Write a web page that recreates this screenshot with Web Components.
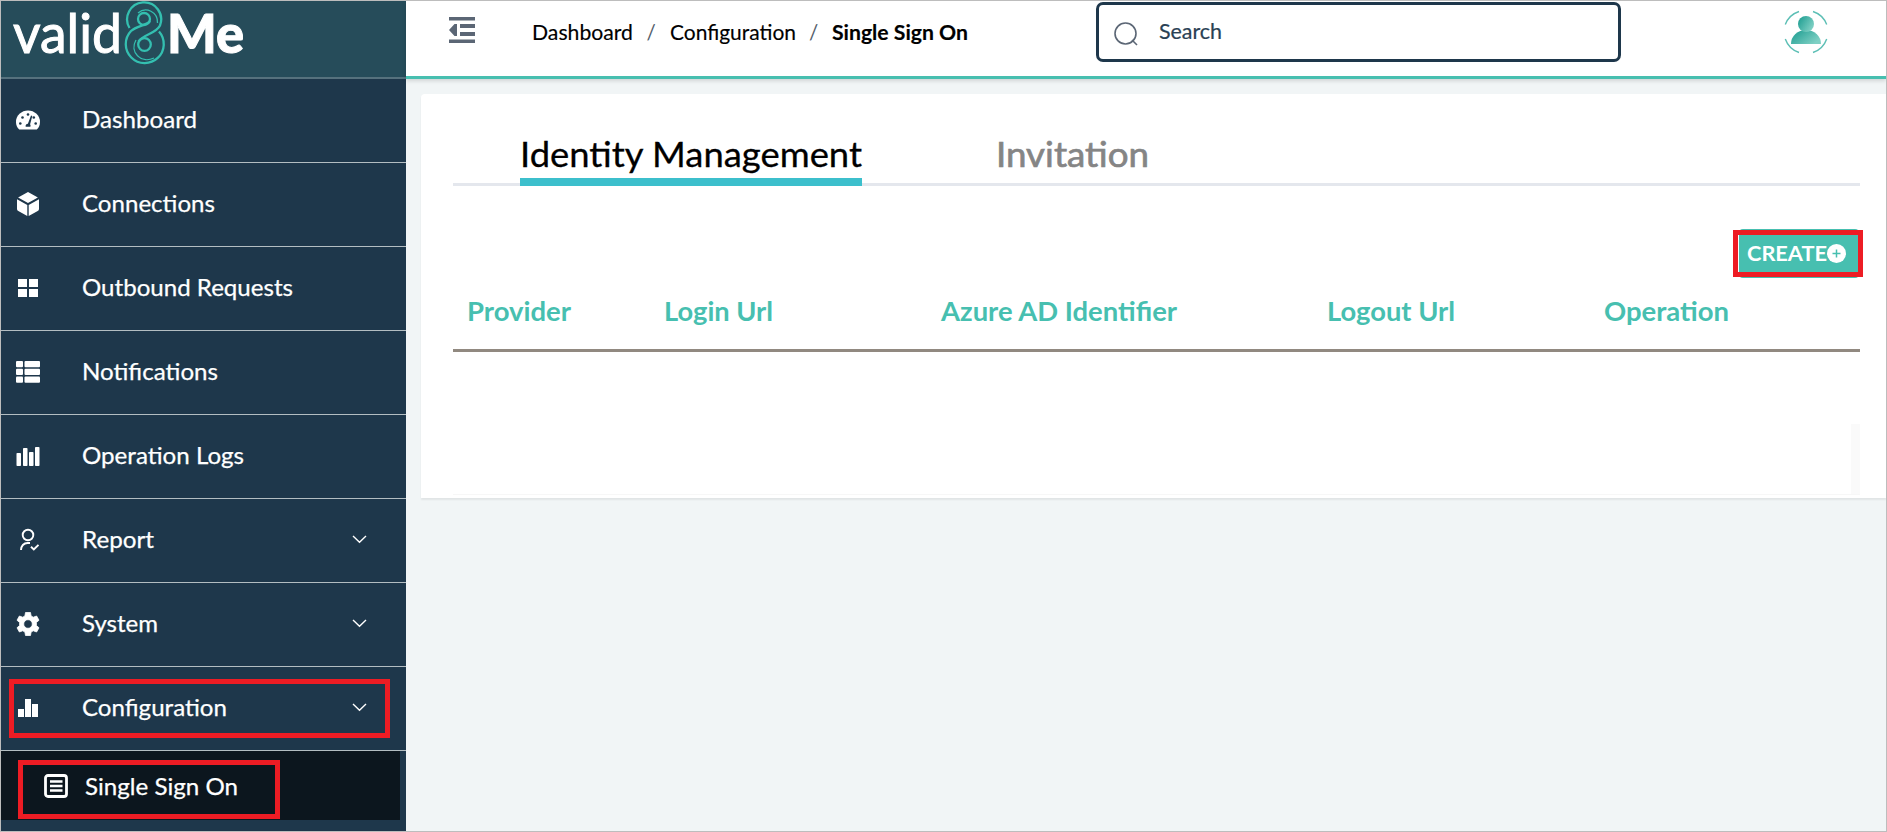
<!DOCTYPE html>
<html lang="en">
<head>
<meta charset="utf-8">
<title>valid8Me</title>
<style>
html,body{margin:0;height:100%}
body{font-family:Lato,"Liberation Sans",sans-serif;overflow:hidden}
</style>
</head>
<body>
<v-app></v-app>
<script>
const define=(name,html,init)=>customElements.define(name,class extends HTMLElement{
  connectedCallback(){
    if(this.shadowRoot)return;
    this.attachShadow({mode:'open'}).innerHTML=typeof html==='function'?html(this):html;
    if(init)init(this);
  }
});

/* A label whose glyphs are condensed or widened to a given advance width. */
define('v-label',`<style>:host{display:block;flex:none;line-height:1;white-space:nowrap}
span{display:inline-block;transform-origin:0 50%}</style><span><slot></slot></span>`,el=>{
  const w=+el.getAttribute('w'),s=el.shadowRoot.querySelector('span');
  el.style.width=w+'px';
  s.style.transform=`scaleX(${w/s.getBoundingClientRect().width})`;
});

const ICONS={
  gauge:'<path fill="#fff" d="M3.2 21.5C1.1 19.7 0 17 0 14A12 11.5 0 0 1 24 14c0 3-1.100 5.700-3.200 7.500z"/><g fill="#1e374b"><circle cx="4.300" cy="15.500" r="1.300"/><circle cx="6.500" cy="9.500" r="1.300"/><circle cx="12" cy="6.500" r="1.300"/><circle cx="17.800" cy="9.500" r="1.300"/><circle cx="19.700" cy="15.500" r="1.300"/><path d="M15 7.500l1.300.4-2.200 8.300c.6.900.6 1.800.2 2.600H9.700c-.5-1.500.5-3 2.200-3.100z"/></g>',
  cube:'<path fill="#fff" d="M12 0l9.900 5.600L12 11 2.100 5.600zM1 7.200l10.300 5.700V24L2.300 19Q1 18.300 1 17zM23 7.200l-10.300 5.700V24l9-5Q23 18.300 23 17z"/>',
  grid:'<path fill="#fff" d="M2 3h9v8H2zM13 3h9v8h-9zM2 13h9v8H2zM13 13h9v8h-9z"/>',
  list:'<g fill="#fff"><rect y="1" width="7" height="6.300" rx="1"/><rect x="8.500" y="1" width="15.500" height="6.300" rx="1"/><rect y="8.800" width="7" height="6.300" rx="1"/><rect x="8.500" y="8.800" width="15.500" height="6.300" rx="1"/><rect y="16.500" width="7" height="6.300" rx="1"/><rect x="8.500" y="16.500" width="15.500" height="6.300" rx="1"/></g>',
  bars:'<g fill="#fff"><rect x=".5" y="9" width="4.500" height="13" rx=".8"/><rect x="7" y="4" width="4.500" height="18" rx=".8"/><rect x="13" y="8" width="4.500" height="14" rx=".8"/><rect x="19" y="3" width="4.500" height="19" rx=".8"/></g>',
  user:'<g fill="none" stroke="#fff" stroke-width="1.900"><circle cx="12" cy="7" r="5.300"/><path d="M5 22c0-4 2.800-7 6.500-7H14M15 18.800l2.800 2.700 4.700-4.700"/></g>',
  gear:'<path fill="#fff" stroke="#fff" stroke-width=".8" stroke-linejoin="round" fill-rule="evenodd" d="M9.500.5h5l.6 3.500 2.200 1.200 3.300-1.200 2.400 4.200-2.600 2.300v3l2.600 2.300-2.400 4.200-3.300-1.200-2.200 1.200-.6 3.500h-5L8.900 20l-2.200-1.200L3.400 20 1 15.800l2.600-2.300v-3L1 8.200 3.400 4l3.300 1.200L8.900 4zM12 7.700a4.300 4.300 0 1 0 0 8.600 4.300 4.300 0 0 0 0-8.600z"/>',
  chart:'<path fill="#fff" d="M2 13h6v8H2zM9 3h6v18H9zM16 8h6v13h-6z"/>',
  doc:'<rect x="1.500" y="1.500" width="21" height="21" rx="2.500" fill="none" stroke="#fff" stroke-width="2.800"/><path stroke="#fff" stroke-width="2.500" d="M6 7.500h12.500M6 12h12.500M6 16.500h12.500"/>'
};

define('v-logo',`<style>:host{box-sizing:border-box;display:flex;height:78px;background:#264c5a;border-bottom:2px solid #56717d;color:#fff;padding-left:12px;align-items:flex-start}
v-label{font-size:54px;margin-top:5px;-webkit-text-stroke:1px #fff}.me{font-weight:900;margin-left:1px}svg{flex:none;margin-left:2px}</style>
<v-label w="109">valid</v-label>
<svg width="42" height="66" viewBox="0 0 42 66" fill="none" stroke="#34bfb0" stroke-width="2.300"><path d="M5.500 27A17 17 0 1 1 36 24.500C32 33 19 33 14.500 40.500"/><path d="M35 30.500A19 19 0 1 1 7 30C13 24.500 22 25 26 20"/><circle cx="20" cy="18" r="6"/><circle cx="20.500" cy="43.500" r="6.300"/><path stroke-width="1.300" d="M14 12C22 5 34 11 33.500 22M12 39C5 51 17 63 30 57"/></svg>
<v-label class="me" w="77">Me</v-label>`);

define('v-nav-item',el=>`<style>
:host{box-sizing:border-box;display:flex;align-items:center;height:84px;padding-left:15px;border-bottom:1px solid #b3bdc2;color:#fff;font-size:24px;position:relative}
:host([sub]){height:69px;width:399px;border:0;background:#0c161e;padding-left:43px}
svg{flex:none;margin:-2px 42px 0 0}:host([sub]) svg{margin:0 17px 0 0}
v-label{margin-top:-3px;-webkit-text-stroke:.25px #fff}
:host([sub]) v-label{margin-top:0}
svg.chev{margin:-2px 39px 0 auto}
.mark{position:absolute;box-sizing:border-box;border:5px solid #ed1c24;left:8px;top:12px;width:381px;height:59px}
:host([sub]) .mark{left:17px;top:9px;width:262px}
</style><svg width="24" height="24" viewBox="0 0 24 24">${ICONS[el.getAttribute('icon')]}</svg>
<v-label w="${el.getAttribute('w')}"><slot></slot></v-label>
${el.hasAttribute('open')?'<svg class="chev" width="15" height="9" viewBox="0 0 15 9"><path d="M1 1l6.500 6.300L14 1" fill="none" stroke="#fff" stroke-width="1.400"/></svg>':''}
${el.hasAttribute('marked')?'<div class="mark"></div>':''}`);

define('v-sidebar',`<style>:host{display:block;width:405px;background:#1e374b;height:100%}</style>
<v-logo></v-logo>
<v-nav-item icon="gauge" w="115">Dashboard</v-nav-item>
<v-nav-item icon="cube" w="133">Connections</v-nav-item>
<v-nav-item icon="grid" w="211">Outbound Requests</v-nav-item>
<v-nav-item icon="list" w="136">Notifications</v-nav-item>
<v-nav-item icon="bars" w="162">Operation Logs</v-nav-item>
<v-nav-item icon="user" w="72" open>Report</v-nav-item>
<v-nav-item icon="gear" w="76" open>System</v-nav-item>
<v-nav-item icon="chart" w="145" open marked>Configuration</v-nav-item>
<v-nav-item icon="doc" w="153" sub marked>Single Sign On</v-nav-item>`);

define('v-search',`<style>:host{box-sizing:border-box;display:flex;width:525px;height:60px;border:3px solid #1e374b;border-radius:7px;padding:17px 0 0 15px;color:#2a4154;font-size:20.500px;background:#fff}
v-label{margin:-1px 0 0 20px;-webkit-text-stroke:.2px}svg{flex:none}</style>
<svg width="25" height="25" viewBox="0 0 25 25" fill="none" stroke="#5b6675" stroke-width="1.600"><circle cx="11.500" cy="11.500" r="10.500"/><path d="M18 18l5 5"/></svg>
<v-label w="63">Search</v-label>`);

define('v-avatar',`<style>:host{display:block;width:46px;height:46px}</style>
<svg width="46" height="46" viewBox="0 0 46 46"><defs><linearGradient id="g" x2="1" y2=".6"><stop stop-color="#189a8e"/><stop offset="1" stop-color="#7fd0c4"/></linearGradient></defs>
<g fill="none" stroke="#5cbfb5" stroke-width="1.400"><path d="M2.300 15.500A22 22 0 0 1 16 2.500M30 2.500A22 22 0 0 1 43.700 15.500M43.700 30A22 22 0 0 1 30 43.500M16 43.500A22 22 0 0 1 2.300 30"/></g>
<path fill="url(#g)" d="M8 35a15 14 0 0 1 30 0z"/><circle cx="23" cy="15" r="8" fill="url(#g)"/></svg>`);

define('v-header',`<style>:host{box-sizing:border-box;display:flex;height:78px;background:#fff;border-bottom:3px solid #47bfb0;box-shadow:0 2px 4px #0002;font-size:20.500px;color:#000;position:relative;align-items:flex-start}
.menu{margin:16px 0 0 43px;flex:none}
nav{display:flex;margin:21px 0 0 57px}i{font-style:normal;color:#55606c;width:36.500px;text-align:center;line-height:1}
nav v-label{-webkit-text-stroke:.15px}
b{font-weight:700}v-search{margin:1px 0 0 128px}v-avatar{margin:8px 0 0 162px}</style>
<svg class="menu" width="26" height="26" viewBox="0 0 26 26" fill="#5b6675"><path d="M0 0h26v3.500H0zM11 7h15v4H11zM11 15h15v4H11zM0 22.500h26V26H0zM0 13l5.500-6H8v12H5.500z"/></svg>
<nav><v-label w="101">Dashboard</v-label><i>/</i><v-label w="126">Configuration</v-label><i>/</i><v-label w="136"><b>Single Sign On</b></v-label></nav>
<v-search></v-search><v-avatar></v-avatar>`);

define('v-tab',`<style>:host{box-sizing:border-box;display:block;height:54px;padding:4px 0 0;font-size:35px;color:#858585;-webkit-text-stroke:.7px #858585}
:host([active]){color:#000;width:342px;border-bottom:8px solid #3cbfcc;-webkit-text-stroke:.3px #000}</style><slot></slot>`);

define('v-create',`<style>:host{box-sizing:border-box;display:flex;width:120px;height:49px;border-radius:4px;background:#47bfb0;color:#fff;font-size:21.500px;font-weight:700;align-items:center;padding-left:8px;position:relative}
.mark{position:absolute;box-sizing:border-box;left:-6px;top:1px;width:130px;height:47px;border:5px solid #ed1c24}svg{flex:none}</style>
<v-label w="80">CREATE</v-label><svg width="19" height="19" viewBox="0 0 19 19"><circle cx="9.500" cy="9.500" r="9.500" fill="#fff"/><path d="M5.500 9.500h8M9.500 5.500v8" stroke="#47bfb0" stroke-width="1.500"/></svg><div class="mark"></div>`);

define('v-table',`<style>:host{display:block}
.head{box-sizing:border-box;display:grid;grid-template-columns:197px 277px 386px 277px 1fr;height:74px;padding:19px 0 0 14px;border-bottom:3px solid #918980;color:#47bfb0;font-size:27px;font-weight:700}
.body{box-sizing:border-box;height:143px;padding-top:72px;border-bottom:1px solid #f7f7f7;display:flex;justify-content:flex-end}.track{width:9px;background:#fafafa}</style>
<div class="head"><v-label w="104">Provider</v-label><v-label w="109">Login Url</v-label><v-label w="236">Azure AD Identifier</v-label><v-label w="128">Logout Url</v-label><v-label w="125">Operation</v-label></div>
<div class="body"><div class="track"></div></div>`);

define('v-card',`<style>:host{box-sizing:border-box;display:block;background:#fff;margin:15px 0 0 15px;height:404px;padding:38px 26px 0 32px;border-radius:4px 0 0 0;box-shadow:0 2px 2px #0001}
.tabs{box-sizing:border-box;display:flex;gap:134px;height:54px;padding-left:67px;background:linear-gradient(#e4e7ed,#e4e7ed) 0 100%/100% 3px no-repeat}
.bar{display:flex;justify-content:flex-end;padding:43px 1px 0 0}</style>
<div class="tabs"><v-tab active><v-label w="342">Identity Management</v-label></v-tab><v-tab><v-label w="153">Invitation</v-label></v-tab></div>
<div class="bar"><v-create></v-create></div><v-table></v-table>`);

define('v-app',`<style>:host{box-sizing:border-box;display:grid;grid-template-columns:405px 1fr;width:1887px;height:832px;border:1px solid #bdbdbd;background:#f1f5f6;overflow:hidden}</style>
<v-sidebar></v-sidebar><main><v-header></v-header><v-card></v-card></main>`);
</script>
</body>
</html>
